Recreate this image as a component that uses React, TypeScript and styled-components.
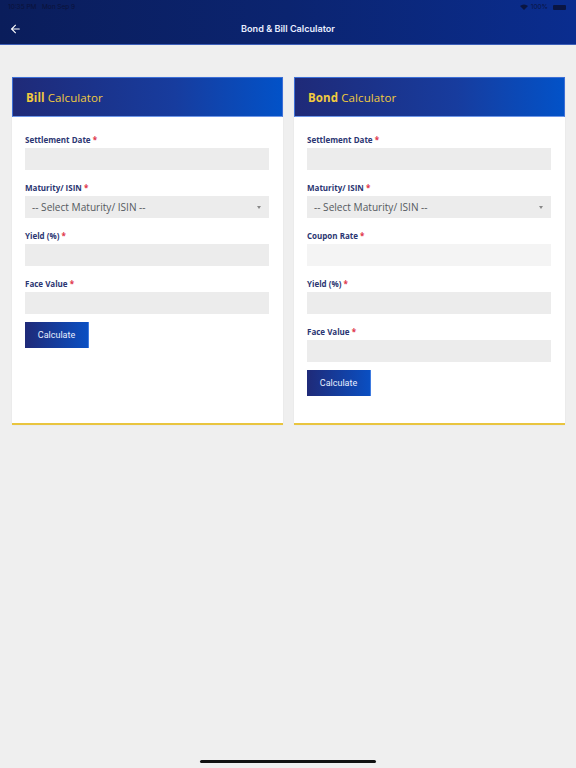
import React from "react";
import styled, { createGlobalStyle } from "styled-components";
import { ArrowLeft } from "lucide-react";

const Global = createGlobalStyle`
  html, body { margin: 0; padding: 0; background: #efefef; }
  body { font-family: "Open Sans", "Noto Sans", sans-serif; }
  * { box-sizing: border-box; }
`;

const Page = styled.div`
  width: 576px;
  height: 768px;
  background: #efefef;
  display: flex;
  flex-direction: column;
  position: relative;
`;

const Header = styled.header`
  height: 45px;
  background: linear-gradient(90deg, #0a1d5b 0%, #0b2470 50%, #0a2d8f 100%);
  border-bottom: 1px solid #3d5fb8;
  display: flex;
  flex-direction: column;
`;

const StatusBar = styled.div`
  height: 14px;
  display: flex;
  align-items: center;
  justify-content: space-between;
  padding: 0 10px 0 8px;
  font-family: Inter, sans-serif;
  font-size: 6.5px;
  color: #0a1030;
  opacity: 0.8;
`;

const StatusRight = styled.div`
  display: flex;
  align-items: center;
  gap: 3px;
`;

const Battery = styled.span`
  width: 13px;
  height: 5px;
  background: #0a1030;
  border-radius: 1px;
  margin-left: 2px;
`;

const NavBar = styled.div`
  flex: 1;
  display: flex;
  align-items: center;
  position: relative;
  justify-content: center;
  padding-bottom: 2px;
`;

const BackButton = styled.button`
  position: absolute;
  left: 9px;
  top: 50%;
  transform: translateY(-50%);
  background: none;
  border: none;
  padding: 0;
  color: #ffffff;
  display: flex;
`;

const Title = styled.h1`
  margin: 0;
  font-family: Inter, sans-serif;
  font-size: 9.1px;
  font-weight: 600;
  color: #e8eeff;
`;

const Grid = styled.main`
  display: grid;
  grid-template-columns: 271px 271px;
  column-gap: 11px;
  padding: 32px 11px 0 12px;
  align-items: stretch;
`;

const Card = styled.section`
  background: #ffffff;
  border-bottom: 2px solid #e9c53f;
  display: flex;
  flex-direction: column;
  box-shadow: 0 0 2px rgba(0, 0, 0, 0.05);
`;

const CardHeader = styled.div`
  height: 40px;
  background: linear-gradient(90deg, #1f2a78 0%, #173c9e 60%, #0252c8 100%);
  border: 1px solid #3d6fd6;
  border-bottom-color: #6e97e8;
  display: flex;
  align-items: center;
  padding: 0 13px;
`;

const CardTitle = styled.h2`
  margin: 0;
  font-family: "Open Sans", sans-serif;
  font-size: 11.5px;
  font-weight: 400;
  color: #f1ca3e;
  letter-spacing: 0.1px;
  b { font-weight: 700; }
`;

const CardBody = styled.div`
  padding: 18px 14px 27px 13px;
  display: flex;
  flex-direction: column;
  gap: 8px;
`;

const FieldList = styled.div`
  display: flex;
  flex-direction: column;
  gap: 13px;
`;

const Field = styled.div`
  display: flex;
  flex-direction: column;
`;

const Label = styled.label`
  font-family: "Open Sans", sans-serif;
  font-size: 8px;
  font-weight: 700;
  line-height: 10px;
  color: #2b3672;
  margin-bottom: 3px;
  span { color: #e0364a; }
`;

const Input = styled.div<{ $light?: boolean }>`
  height: 22px;
  background: ${(p) => (p.$light ? "#f4f4f4" : "#ececec")};
`;

const Select = styled.div`
  height: 22px;
  background: #ececec;
  display: flex;
  align-items: center;
  justify-content: space-between;
  padding: 0 8px 0 7px;
  font-family: "Open Sans", sans-serif;
  font-size: 10.1px;
  color: #555a60;
`;

const Caret = styled.span`
  width: 0;
  height: 0;
  border-left: 2.5px solid transparent;
  border-right: 2.5px solid transparent;
  border-top: 3px solid #888;
`;

const Actions = styled.div`
  display: flex;
`;

const Button = styled.button`
  width: 64px;
  height: 26px;
  border: none;
  padding: 0;
  background: linear-gradient(90deg, #1f2a78 0%, #0a4fc2 100%);
  border-right: 1px solid #3f7be0;
  color: #e8eeff;
  font-family: Roboto, sans-serif;
  font-size: 9px;
`;

const HomeIndicator = styled.div`
  position: absolute;
  left: 200px;
  bottom: 5px;
  width: 176px;
  height: 3px;
  border-radius: 2px;
  background: #111;
`;

type FieldDef = { label: string; kind: "input" | "select"; light?: boolean };

const FormField: React.FC<{ f: FieldDef }> = ({ f }) => (
  <Field>
    <Label>
      {f.label} <span>*</span>
    </Label>
    {f.kind === "select" ? (
      <Select>
        -- Select Maturity/ ISIN --
        <Caret />
      </Select>
    ) : (
      <Input $light={f.light} />
    )}
  </Field>
);

const CalcCard: React.FC<{ name: string; fields: FieldDef[] }> = ({ name, fields }) => (
  <Card>
    <CardHeader>
      <CardTitle>
        <b>{name}</b> Calculator
      </CardTitle>
    </CardHeader>
    <CardBody>
      <FieldList>
        {fields.map((f) => (
          <FormField key={f.label} f={f} />
        ))}
      </FieldList>
      <Actions>
        <Button>Calculate</Button>
      </Actions>
    </CardBody>
  </Card>
);

const billFields: FieldDef[] = [
  { label: "Settlement Date", kind: "input" },
  { label: "Maturity/ ISIN", kind: "select" },
  { label: "Yield (%)", kind: "input" },
  { label: "Face Value", kind: "input" },
];

const bondFields: FieldDef[] = [
  { label: "Settlement Date", kind: "input" },
  { label: "Maturity/ ISIN", kind: "select" },
  { label: "Coupon Rate", kind: "input", light: true },
  { label: "Yield (%)", kind: "input" },
  { label: "Face Value", kind: "input" },
];

export default function App() {
  return (
    <>
      <Global />
      <Page>
        <Header>
          <StatusBar>
            <span>10:35 PM&nbsp;&nbsp;&nbsp;Mon Sep 9</span>
            <StatusRight>
              <svg width="8" height="6" viewBox="0 0 8 6">
                <path d="M0 2 A6 6 0 0 1 8 2 L4 6 Z" fill="#0a1030" />
              </svg>
              <span>100%</span>
              <Battery />
            </StatusRight>
          </StatusBar>
          <NavBar>
            <BackButton aria-label="Back">
              <ArrowLeft size={13} strokeWidth={2} />
            </BackButton>
            <Title>Bond &amp; Bill Calculator</Title>
          </NavBar>
        </Header>
        <Grid>
          <CalcCard name="Bill" fields={billFields} />
          <CalcCard name="Bond" fields={bondFields} />
        </Grid>
        <HomeIndicator />
      </Page>
    </>
  );
}
